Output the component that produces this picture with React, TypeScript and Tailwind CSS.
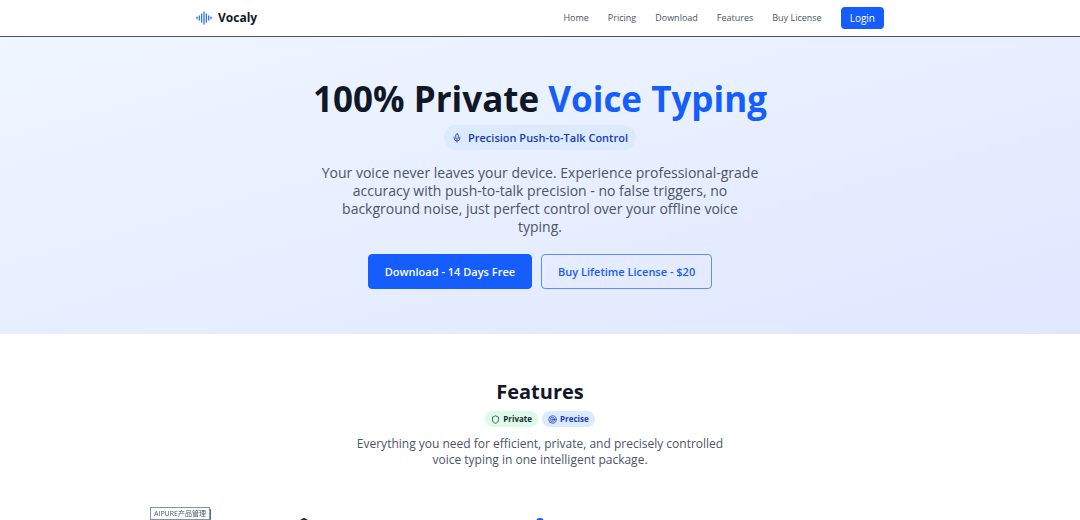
import { Mic, Shield, Target } from "lucide-react"

const navLinks = [
  { label: "Home", href: "#home" },
  { label: "Pricing", href: "#pricing" },
  { label: "Download", href: "#download" },
  { label: "Features", href: "#features" },
  { label: "Buy License", href: "#license" },
]

const bars = [
  { x: 1, h: 1.5 },
  { x: 3.3, h: 4 },
  { x: 5.6, h: 8 },
  { x: 8, h: 12 },
  { x: 10.4, h: 8 },
  { x: 12.7, h: 4 },
  { x: 15, h: 1.5 },
]

function Logo() {
  return (
    <svg viewBox="0 0 16 14" className="h-3.5 w-4" aria-hidden="true">
      {bars.map((bar) => (
        <line
          key={bar.x}
          x1={bar.x}
          x2={bar.x}
          y1={7 - bar.h / 2}
          y2={7 + bar.h / 2}
          stroke="#2f74f5"
          strokeWidth="1.3"
          strokeLinecap="round"
        />
      ))}
    </svg>
  )
}

function Header() {
  return (
    <header className="border-b border-[#4b5563] bg-white">
      <div className="mx-auto flex h-9 max-w-[688px] items-center justify-between">
        <a href="#home" className="flex items-center gap-1.5 text-[12px] font-bold text-gray-900">
          <Logo />
          Vocaly
        </a>
        <nav className="flex items-center gap-[19px] text-[9px] text-gray-600">
          {navLinks.map((link) => (
            <a key={link.label} href={link.href}>
              {link.label}
            </a>
          ))}
          <button type="button" className="rounded bg-[#155dfc] px-[9px] py-1 text-[10px] leading-[14px] text-white">
            Login
          </button>
        </nav>
      </div>
    </header>
  )
}

function Hero() {
  return (
    <section className="bg-linear-to-br from-blue-50 to-indigo-100 pt-[43px] pb-[45px] text-center">
      <h1 className="text-[35px] leading-[38px] font-bold text-gray-900">
        100% Private <span className="text-[#155dfc]">Voice Typing</span>
      </h1>
      <div className="mt-[7px] flex justify-center">
        <span className="flex items-center gap-1.5 rounded-full bg-blue-100 px-2 py-1 text-[11px] leading-[17px] font-semibold text-blue-800">
          <Mic className="size-2.5" />
          Precision Push-to-Talk Control
        </span>
      </div>
      <p className="mx-auto mt-[14px] max-w-[440px] text-[14px] leading-[18px] text-gray-600">
        Your voice never leaves your device. Experience professional-grade accuracy with push-to-talk
        precision - no false triggers, no background noise, just perfect control over your offline
        voice typing.
      </p>
      <div className="mt-[18px] flex justify-center gap-[9px] text-[11px] leading-[17px] font-semibold">
        <button type="button" className="rounded border border-[#155dfc] bg-[#155dfc] px-4 py-2 text-white">
          Download - 14 Days Free
        </button>
        <button type="button" className="rounded border border-[#5b8dfb] px-4 py-2 text-[#155dfc]">
          Buy Lifetime License - $20
        </button>
      </div>
    </section>
  )
}

function Features() {
  return (
    <section id="features" className="bg-white pt-[44px] text-center">
      <h2 className="text-[20px] leading-[27px] font-bold text-gray-900">Features</h2>
      <div className="mt-[6px] flex justify-center gap-1 text-[8px] leading-[12px] font-bold">
        <span className="flex items-center gap-[3px] rounded-full bg-green-100 px-[6px] py-0.5 text-gray-800">
          <Shield className="size-[9px]" />
          Private
        </span>
        <span className="flex items-center gap-[3px] rounded-full bg-blue-100 px-[6px] py-0.5 text-blue-800">
          <Target className="size-[9px]" />
          Precise
        </span>
      </div>
      <p className="mx-auto mt-[9px] max-w-[384px] text-[12px] leading-[16px] text-gray-600">
        Everything you need for efficient, private, and precisely controlled voice typing in one
        intelligent package.
      </p>
      <div className="mx-auto mt-[49px] grid max-w-[708px] grid-cols-3 justify-items-center">
        <Shield className="size-6 text-gray-800" />
        <Mic className="size-6 text-[#155dfc]" />
      </div>
    </section>
  )
}

export default function App() {
  return (
    <div className="relative min-h-screen overflow-hidden bg-white font-['Open_Sans','Noto_Sans_CJK_SC',sans-serif]">
      <Header />
      <main>
        <Hero />
        <Features />
      </main>
      <div className="fixed bottom-0 left-[150px] border border-[#8492a6] bg-white px-[3px] text-[7px] leading-[11px] text-gray-600 shadow-[1px_2px_0_#6b7280]">
        AIPURE产品管理
      </div>
    </div>
  )
}
